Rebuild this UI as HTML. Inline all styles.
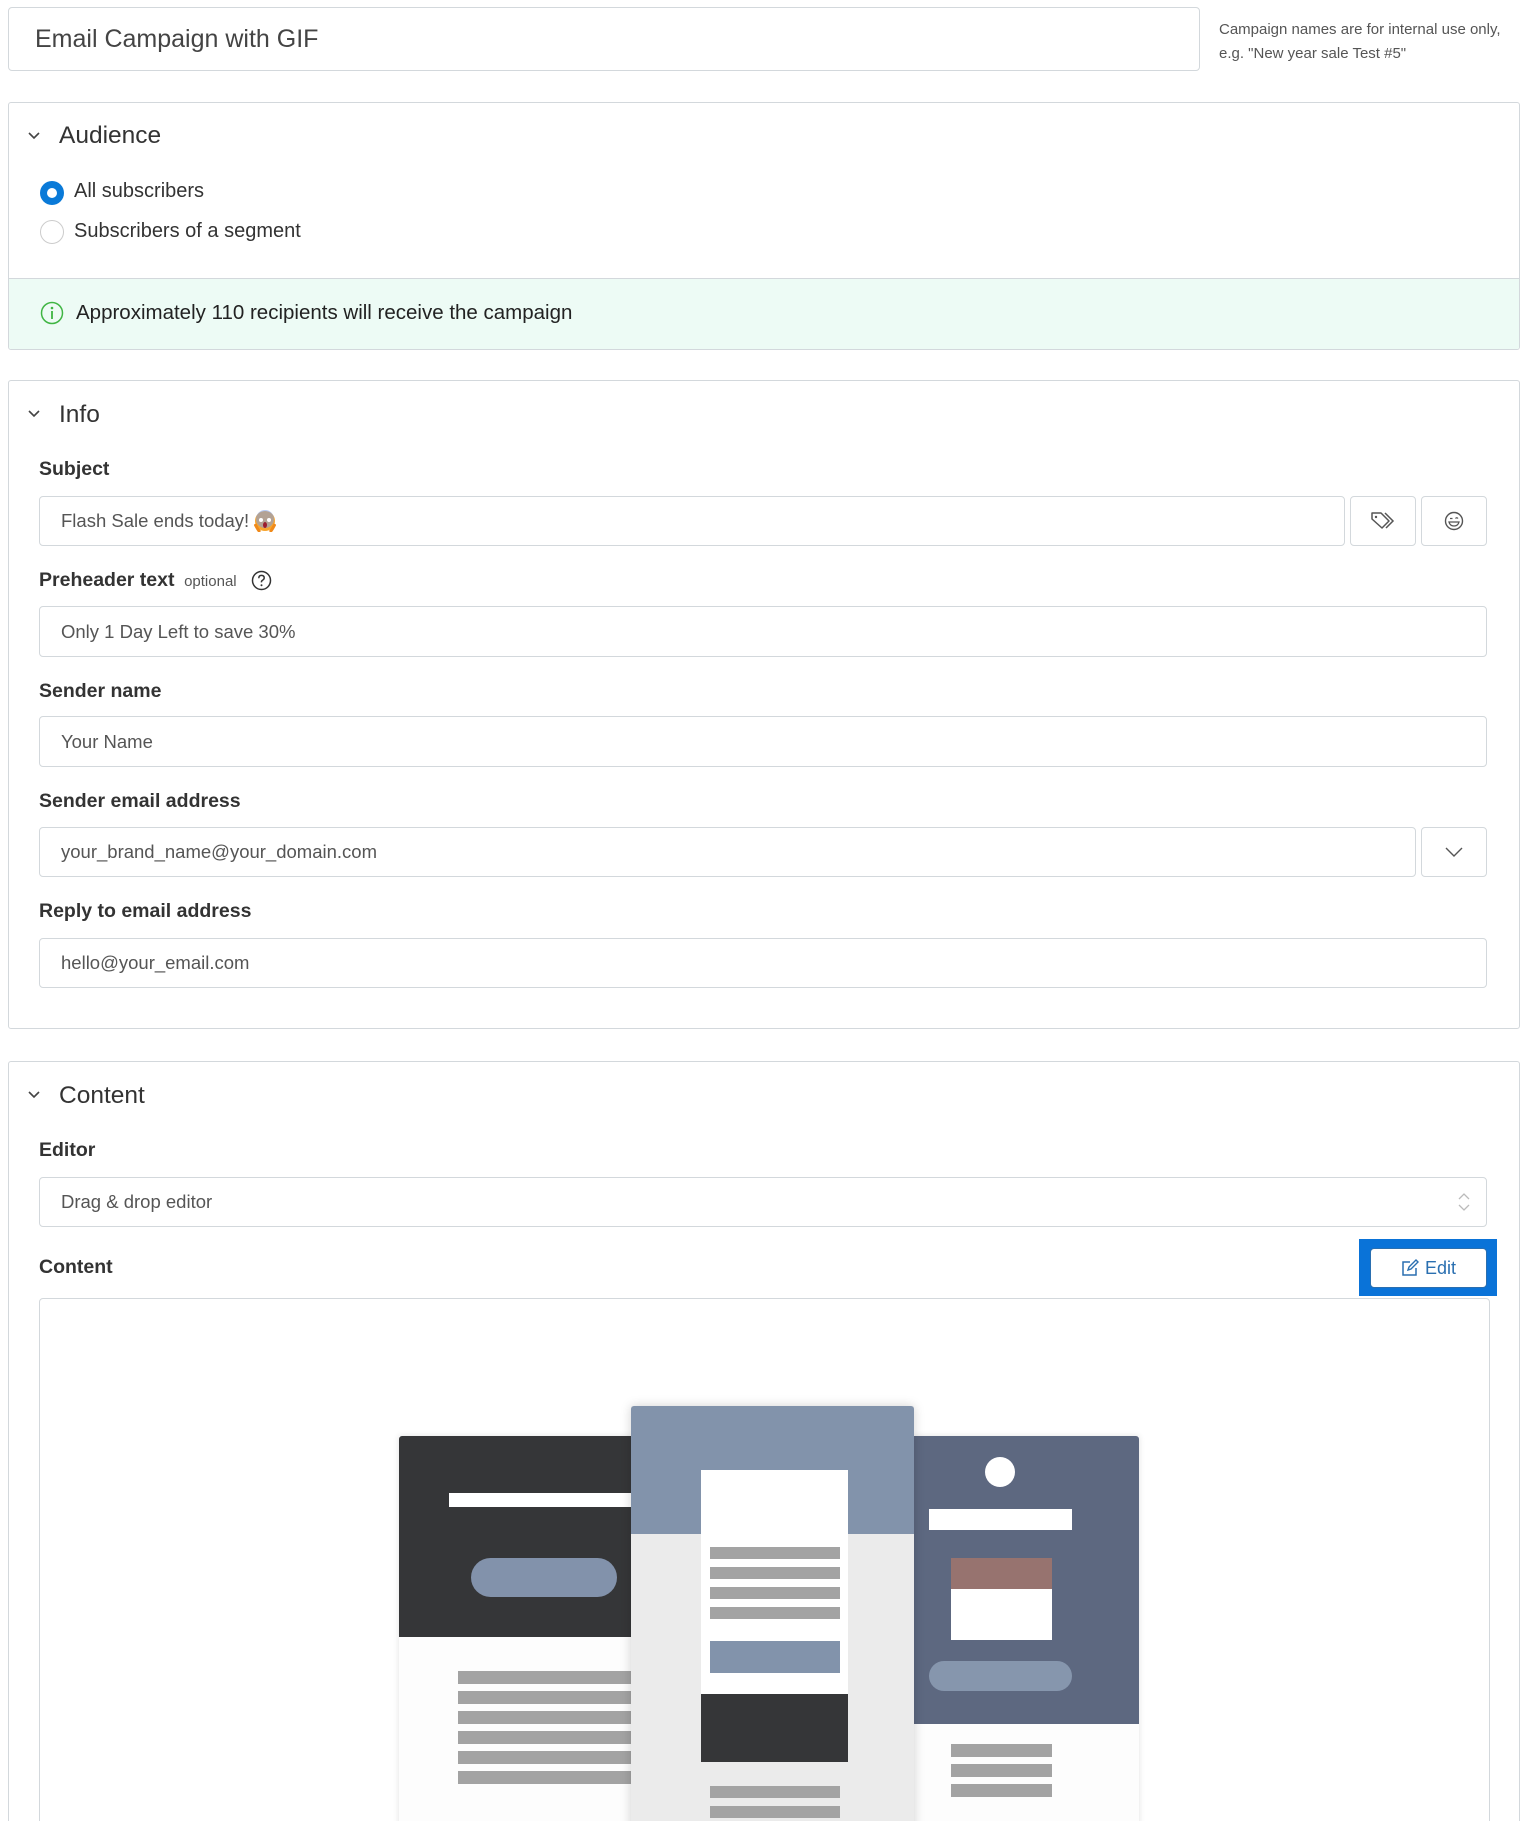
<!DOCTYPE html>
<html style="overflow:hidden;height:1821px"><head><meta charset="utf-8"><style>
*{box-sizing:border-box;margin:0;padding:0}
html,body{width:1531px;height:1821px;overflow:hidden}
body{background:#fff;font-family:"Liberation Sans",sans-serif;color:#333}
#w{position:relative;width:1531px;height:1821px;overflow:hidden}
.a{position:absolute}
.card{position:absolute;left:8px;width:1512px;border:1.5px solid #d3d8dc;border-radius:3px;background:#fff}
.inp{position:absolute;border:1.5px solid #d3d8dc;border-radius:4px;background:#fff;font-size:18.5px;color:#555;padding-left:21px;display:flex;align-items:center}
.lbl{position:absolute;left:39px;font-size:19.5px;font-weight:bold;color:#333}
.h{position:absolute;left:59px;font-size:24.5px;color:#333}
.chev{position:absolute;left:28px;width:12px;height:12px}
.g{position:absolute;background:#a3a3a3;height:13px}
</style></head><body><div id="w">

<div class="inp" style="left:8px;top:7px;width:1192px;height:64px;font-size:25px;padding-left:26px;color:#444">Email Campaign with GIF</div>
<div class="a" style="left:1219px;top:18px;font-size:15px;color:#555;line-height:24px">Campaign names are for internal use only,<br>e.g. "New year sale Test #5"</div>

<!-- Audience -->
<div class="card" style="top:102px;height:248px;overflow:hidden">
 <div class="a" style="left:0;top:175px;width:100%;height:73px;background:#edfbf5;border-top:1.5px solid #d3d8dc"></div>
</div>
<svg class="chev" style="top:130px" viewBox="0 0 12 12"><path d="M1 3l5 5 5-5" fill="none" stroke="#444" stroke-width="1.6"/></svg>
<div class="h" style="top:122px">Audience</div>
<div class="a" style="left:40px;top:181px;width:24px;height:24px;border-radius:50%;background:#0a7ad8"></div>
<div class="a" style="left:47px;top:188px;width:10px;height:10px;border-radius:50%;background:#fff"></div>
<div class="a" style="left:74px;top:180px;font-size:20px">All subscribers</div>
<div class="a" style="left:40px;top:220px;width:24px;height:24px;border-radius:50%;border:1.5px solid #ccc"></div>
<div class="a" style="left:74px;top:220px;font-size:20px">Subscribers of a segment</div>
<svg class="a" style="left:40px;top:301px" width="24" height="24" viewBox="0 0 24 24"><circle cx="12" cy="12" r="10.5" fill="none" stroke="#3fb543" stroke-width="1.5"/><circle cx="12" cy="7" r="1.3" fill="#3fb543"/><path d="M12 10v8" stroke="#3fb543" stroke-width="1.8"/></svg>
<div class="a" style="left:76px;top:301px;font-size:20.5px;color:#222">Approximately 110 recipients will receive the campaign</div>

<!-- Info -->
<div class="card" style="top:380px;height:649px"></div>
<svg class="chev" style="top:408px" viewBox="0 0 12 12"><path d="M1 3l5 5 5-5" fill="none" stroke="#444" stroke-width="1.6"/></svg>
<div class="h" style="top:401px">Info</div>
<div class="lbl" style="top:458px">Subject</div>
<div class="inp" style="left:39px;top:496px;width:1306px;height:50px">Flash Sale ends today!&nbsp;<svg width="22" height="22" viewBox="0 0 22 22"><circle cx="11" cy="11" r="10" fill="#f7a62f"/><circle cx="11" cy="9" r="9" fill="#7b9ee8" opacity=".55"/><circle cx="7" cy="10" r="2" fill="#fff"/><circle cx="15" cy="10" r="2" fill="#fff"/><ellipse cx="11" cy="15" rx="2" ry="3" fill="#9b1c2e"/><path d="M1 14q3 6 5 8M21 14q-3 6-5 8" stroke="#f08a1a" stroke-width="3"/></svg></div>
<div class="inp" style="left:1350px;top:496px;width:66px;height:50px;justify-content:center;padding:0"><svg width="26" height="20" viewBox="0 0 26 20"><path d="M2 2h9l8 8-7 7-10-9z" fill="none" stroke="#555" stroke-width="1.5" stroke-linejoin="round"/><path d="M15 2l8 8-7 7" fill="none" stroke="#555" stroke-width="1.5"/><circle cx="6" cy="6" r="1.2" fill="#555"/></svg></div>
<div class="inp" style="left:1421px;top:496px;width:66px;height:50px;justify-content:center;padding:0"><svg width="20" height="20" viewBox="0 0 20 20"><circle cx="10" cy="10" r="8.5" fill="none" stroke="#555" stroke-width="1.4"/><path d="M5 11h10q-1 4-5 4t-5-4z" fill="none" stroke="#555" stroke-width="1.3"/><path d="M6 7.5h2.5M11.5 7.5q1.2-1.5 2.5 0" stroke="#555" stroke-width="1.3" fill="none"/></svg></div>

<div class="lbl" style="top:569px">Preheader text <span style="font-weight:normal;font-size:15px;color:#555">&nbsp;optional</span></div>
<svg class="a" style="left:251px;top:570px" width="21" height="21" viewBox="0 0 21 21"><circle cx="10.5" cy="10.5" r="9" fill="none" stroke="#333" stroke-width="1.5"/><path d="M7.8 8.2q0-2.8 2.7-2.8t2.7 2.5q0 1.4-1.5 2.2t-1.2 2.3" fill="none" stroke="#333" stroke-width="1.5"/><circle cx="10.5" cy="15.2" r="1" fill="#333"/></svg>
<div class="inp" style="left:39px;top:606px;width:1448px;height:51px">Only 1 Day Left to save 30%</div>
<div class="lbl" style="top:680px">Sender name</div>
<div class="inp" style="left:39px;top:716px;width:1448px;height:51px">Your Name</div>
<div class="lbl" style="top:790px">Sender email address</div>
<div class="inp" style="left:39px;top:827px;width:1377px;height:50px">your_brand_name@your_domain.com</div>
<div class="inp" style="left:1421px;top:827px;width:66px;height:50px;justify-content:center;padding:0"><svg width="18" height="10" viewBox="0 0 18 10"><path d="M1 1l8 8 8-8" fill="none" stroke="#555" stroke-width="1.4"/></svg></div>
<div class="lbl" style="top:900px">Reply to email address</div>
<div class="inp" style="left:39px;top:938px;width:1448px;height:50px">hello@your_email.com</div>

<!-- Content -->
<div class="card" style="top:1061px;height:800px"></div>
<svg class="chev" style="top:1089px" viewBox="0 0 12 12"><path d="M1 3l5 5 5-5" fill="none" stroke="#444" stroke-width="1.6"/></svg>
<div class="h" style="top:1082px">Content</div>
<div class="lbl" style="top:1139px">Editor</div>
<div class="inp" style="left:39px;top:1177px;width:1448px;height:50px">Drag &amp; drop editor</div>
<svg class="a" style="left:1457px;top:1192px" width="14" height="20" viewBox="0 0 14 20"><path d="M2 7l5-5 5 5M2 13l5 5 5-5" fill="none" stroke="#bbb" stroke-width="1.3"/></svg>
<div class="lbl" style="top:1256px">Content</div>
<div class="a" style="left:1359px;top:1239px;width:138px;height:57px;background:#0a73d8"></div>
<div class="a" style="left:1370px;top:1248px;width:117px;height:40px;background:#fff;border:1.5px solid #2a6fb0;border-radius:4px;display:flex;align-items:center;justify-content:center;font-size:18px;color:#2a6fb0"><svg width="18" height="18" viewBox="0 0 18 18" style="margin-right:6px"><path d="M9 3H2v13h13V9" fill="none" stroke="#2a6fb0" stroke-width="1.5"/><path d="M7 11l1-3 7-7 2 2-7 7z" fill="none" stroke="#2a6fb0" stroke-width="1.4"/></svg>Edit</div>
<div class="a" style="left:39px;top:1298px;width:1451px;height:600px;border:1.5px solid #d3d8dc;border-radius:4px"></div>

<!-- illustration -->
<div class="a" style="left:399px;top:1436px;width:234px;height:450px;background:#fdfdfd;box-shadow:0 0 6px rgba(0,0,0,.12)"></div>
<div class="a" style="left:399px;top:1436px;width:234px;height:201px;background:#353638;border-radius:3px 0 0 0"></div>
<div class="a" style="left:449px;top:1493px;width:184px;height:14px;background:#fff"></div>
<div class="a" style="left:471px;top:1558px;width:146px;height:39px;background:#8292ab;border-radius:20px"></div>
<div class="g" style="left:458px;top:1671px;width:175px"></div>
<div class="g" style="left:458px;top:1691px;width:175px"></div>
<div class="g" style="left:458px;top:1711px;width:175px"></div>
<div class="g" style="left:458px;top:1731px;width:175px"></div>
<div class="g" style="left:458px;top:1751px;width:175px"></div>
<div class="g" style="left:458px;top:1771px;width:175px"></div>

<div class="a" style="left:913px;top:1436px;width:226px;height:450px;background:#fdfdfd;box-shadow:0 0 6px rgba(0,0,0,.12)"></div>
<div class="a" style="left:913px;top:1436px;width:226px;height:288px;background:#5d6880;border-radius:0 3px 0 0"></div>
<div class="a" style="left:985px;top:1457px;width:30px;height:30px;border-radius:50%;background:#fff"></div>
<div class="a" style="left:929px;top:1509px;width:143px;height:21px;background:#fff"></div>
<div class="a" style="left:951px;top:1558px;width:101px;height:31px;background:#97736f"></div>
<div class="a" style="left:951px;top:1589px;width:101px;height:51px;background:#fff"></div>
<div class="a" style="left:929px;top:1661px;width:143px;height:30px;background:#8696ad;border-radius:15px"></div>
<div class="g" style="left:951px;top:1744px;width:101px"></div>
<div class="g" style="left:951px;top:1764px;width:101px"></div>
<div class="g" style="left:951px;top:1784px;width:101px"></div>

<div class="a" style="left:631px;top:1406px;width:283px;height:480px;background:#ebebeb;box-shadow:0 0 10px rgba(0,0,0,.18)"></div>
<div class="a" style="left:631px;top:1406px;width:283px;height:128px;background:#8293ab;border-radius:3px 3px 0 0"></div>
<div class="a" style="left:701px;top:1470px;width:147px;height:224px;background:#fff"></div>
<div class="g" style="left:710px;top:1547px;width:130px;height:12px"></div>
<div class="g" style="left:710px;top:1567px;width:130px;height:12px"></div>
<div class="g" style="left:710px;top:1587px;width:130px;height:12px"></div>
<div class="g" style="left:710px;top:1607px;width:130px;height:12px"></div>
<div class="a" style="left:710px;top:1641px;width:130px;height:32px;background:#8293ab"></div>
<div class="a" style="left:701px;top:1694px;width:147px;height:68px;background:#353638"></div>
<div class="g" style="left:710px;top:1786px;width:130px;height:12px"></div>
<div class="g" style="left:710px;top:1806px;width:130px;height:12px"></div>
</div></body></html>
